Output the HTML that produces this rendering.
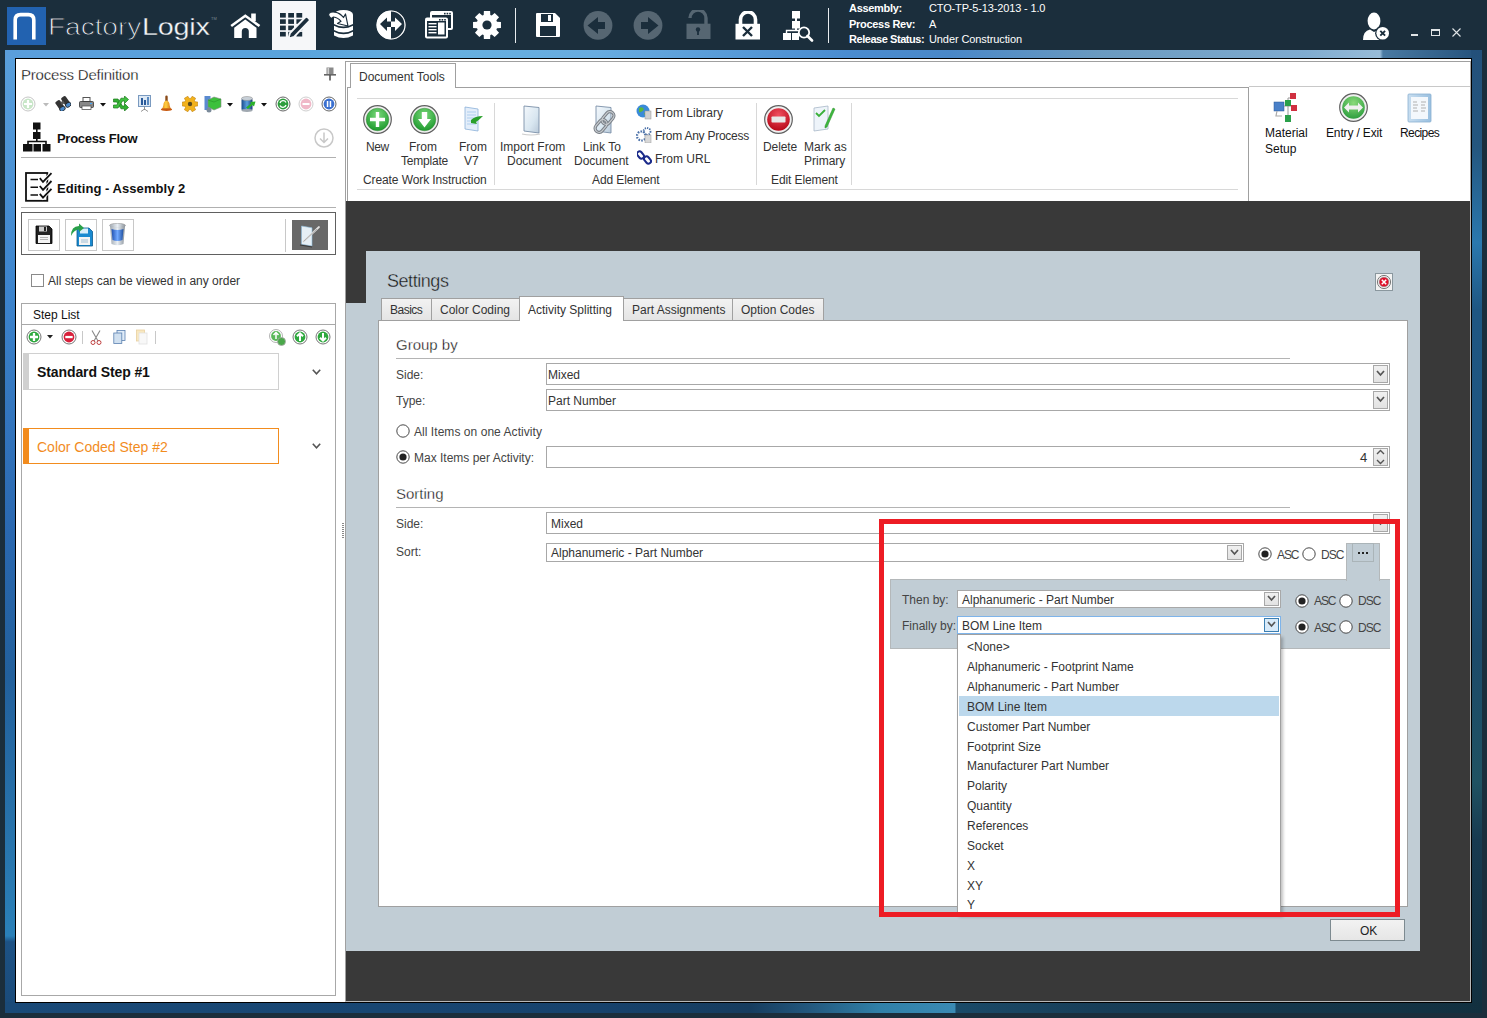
<!DOCTYPE html><html><head><meta charset="utf-8"><style>
*{margin:0;padding:0;box-sizing:border-box}
html,body{width:1487px;height:1018px;overflow:hidden;background:#1b2e3c;font-family:"Liberation Sans",sans-serif}
div,svg{position:absolute}
.t{white-space:nowrap;line-height:1}
</style></head><body><div style="left:5px;top:50px;width:11px;height:963px;background:linear-gradient(180deg,#5aa0dc 0%,#3d84cc 25%,#2a68b0 50%,#22609c 65%,#2874ac 82%,#2a80b8 92%,#1d5285 92.6%,#1a4a78 100%)"></div>
<div style="left:5px;top:50px;width:1477px;height:9px;background:linear-gradient(90deg,#5a9edc 0%,#5aa4dc 20%,#66b0e0 30%,#68ace0 40%,#4a8cd0 57%,#4a88c8 64%,#6a9ac0 74%,#80acd0 88%,#98bcd8 93.1%,#4a7aa2 93.3%,#23507a 100%)"></div>
<div style="left:1471px;top:50px;width:11px;height:963px;background:linear-gradient(180deg,#23507a 0%,#24567e 10%,#2a78ae 20%,#1e5682 27%,#1e5580 50%,#1c4a6a 62%,#1f5262 76%,#173a50 82%,#12303f 100%)"></div>
<div style="left:5px;top:1002px;width:1477px;height:11px;background:linear-gradient(90deg,#1a4a78 0%,#184672 25%,#17426c 40.3%,#163c5e 50.4%,#23587e 54.5%,#3080a8 59.2%,#3a8ab4 64.3%,#1a4a68 64.4%,#183e58 74.1%,#12303f 100%)"></div>
<div style="left:15px;top:58px;width:1457px;height:945px;background:#000"></div>
<div style="left:16px;top:59px;width:1455px;height:943px;background:#fff"></div>
<div style="left:7px;top:7px;width:39px;height:38px;background:#2262b0"></div>
<svg style="left:7px;top:7px" width="39" height="38" viewBox="0 0 39 38"><path d="M8.2 32.5 V13 Q8.2 7.6 13.6 7.6 H21.4 Q26.8 7.6 26.8 13 V32.5" fill="none" stroke="#fff" stroke-width="3.6" stroke-linecap="butt"/></svg>
<div class="t" style="left:48px;top:15px;font-size:24px;font-weight:400;color:#e8ecef;letter-spacing:-0.1px;transform:scaleX(1.175);transform-origin:0 0;-webkit-text-stroke:0.9px #1b2e3c">Factory</div>
<div class="t" style="left:142px;top:15px;font-size:24px;font-weight:400;color:#f4f6f8;letter-spacing:-0.2px;transform:scaleX(1.2);transform-origin:0 0;-webkit-text-stroke:0.3px #1b2e3c">Logix</div>
<div class="t" style="left:211px;top:17px;font-size:4px;font-weight:400;color:#7a8894;">TM</div>
<div style="left:272px;top:1px;width:44px;height:49px;background:#f6f7f9"></div>
<svg style="left:230px;top:12px" width="31" height="27" viewBox="0 0 31 27"><path d="M1.2 14 L15.3 3.8 L29.5 14" fill="none" stroke="#fff" stroke-width="2.6" stroke-linejoin="miter"/><rect x="21.2" y="1.5" width="4.6" height="7.5" fill="#fff"/><path d="M4.2 15.8 L15.3 7.6 L26.5 15.8 V26 H18.8 V19.5 A3.5 3.5 0 0 0 11.8 19.5 V26 H4.2 Z" fill="#fff"/></svg>
<svg style="left:279px;top:12px" width="32" height="28" viewBox="0 0 32 28"><rect x="1.0" y="1.0" width="5.8" height="4.6" fill="#1b2e3c"/><rect x="9.2" y="1.0" width="5.8" height="4.6" fill="#1b2e3c"/><rect x="17.4" y="1.0" width="5.8" height="4.6" fill="#1b2e3c"/><rect x="1.0" y="7.3" width="5.8" height="4.6" fill="#1b2e3c"/><rect x="9.2" y="7.3" width="5.8" height="4.6" fill="#1b2e3c"/><rect x="17.4" y="7.3" width="5.8" height="4.6" fill="#1b2e3c"/><rect x="1.0" y="13.6" width="5.8" height="4.6" fill="#1b2e3c"/><rect x="9.2" y="13.6" width="5.8" height="4.6" fill="#1b2e3c"/><rect x="17.4" y="13.6" width="5.8" height="4.6" fill="#1b2e3c"/><rect x="1.0" y="19.9" width="5.8" height="4.6" fill="#1b2e3c"/><rect x="9.2" y="19.9" width="5.8" height="4.6" fill="#1b2e3c"/><rect x="17.4" y="19.9" width="5.8" height="4.6" fill="#1b2e3c"/><path d="M9.5 26.5 L11 21 L26 5.5 Q27.5 4.2 29 5.5 L30 6.5 Q31.2 8 30 9.3 L15 24.8 Z" fill="#1b2e3c" stroke="#f6f7f9" stroke-width="1.8" stroke-linejoin="round"/></svg>
<svg style="left:328px;top:9px" width="27" height="31" viewBox="0 0 27 31"><ellipse cx="15.5" cy="5.5" rx="9.5" ry="4.5" fill="#fff"/><path d="M6 6 V15 Q15.5 20 25 15 V6 Z" fill="#fff"/><path d="M6 16.8 Q15.5 21.8 25 16.8 V21 Q15.5 26 6 21 Z" fill="#fff"/><path d="M6 22.8 Q15.5 27.8 25 22.8 V26.5 Q15.5 31.5 6 26.5 Z" fill="#fff"/><path d="M0.8 4.5 Q3 2.5 7 3.2 Q12 4 15.5 8.5 L17.5 5 L20 17 L9.5 14.5 L13 12.3 Q10 8.5 5.5 8 Q3.5 10 2.5 9 Q0 6.5 0.8 4.5 Z" fill="#fff" stroke="#1b2e3c" stroke-width="1.2" stroke-linejoin="round"/></svg>
<svg style="left:376px;top:10px" width="30" height="30" viewBox="0 0 30 30"><circle cx="15" cy="15" r="14.3" fill="#fff"/><path d="M15 0.7 A14.3 14.3 0 0 1 15 29.3 Z" fill="#1b2e3c"/><circle cx="15" cy="15" r="14" fill="none" stroke="#fff" stroke-width="1.2"/><path d="M4 14 L11 7.5 V11.5 H15 V17 H11 V21 Z" fill="#1b2e3c"/><path d="M26 14 L19 7.5 V11.5 H15 V17 H19 V21 Z" fill="#fff"/></svg>
<svg style="left:424px;top:10px" width="31" height="30" viewBox="0 0 31 30"><rect x="6" y="1" width="23" height="19" rx="2" fill="#fff"/><rect x="8" y="5" width="19" height="13" fill="#1b2e3c"/><rect x="1" y="7.5" width="23" height="21" rx="2" fill="#fff"/><rect x="3" y="11" width="19" height="15.5" fill="#1b2e3c"/><rect x="4.5" y="13" width="8" height="1.4" fill="#fff"/><rect x="4.5" y="16" width="8" height="1.4" fill="#fff"/><rect x="4.5" y="19" width="8" height="1.4" fill="#fff"/><rect x="4.5" y="22" width="8" height="1.4" fill="#fff"/><rect x="14" y="12.5" width="6.5" height="12" fill="#fff"/><rect x="20" y="2.8" width="1.6" height="1.6" fill="#1b2e3c"/><rect x="22.6" y="2.8" width="1.6" height="1.6" fill="#1b2e3c"/><rect x="25.2" y="2.8" width="1.6" height="1.6" fill="#1b2e3c"/><rect x="15" y="9" width="1.6" height="1.6" fill="#1b2e3c"/><rect x="17.6" y="9" width="1.6" height="1.6" fill="#1b2e3c"/><rect x="20.2" y="9" width="1.6" height="1.6" fill="#1b2e3c"/></svg>
<svg style="left:472px;top:10px" width="30" height="30" viewBox="0 0 30 30"><g transform="translate(15,15)"><path d="M13.96 -3.12 L13.96 3.12 L9.97 3.30 L9.38 4.71 L12.07 7.66 L7.66 12.07 L4.71 9.38 L3.30 9.97 L3.12 13.96 L-3.12 13.96 L-3.30 9.97 L-4.71 9.38 L-7.66 12.07 L-12.07 7.66 L-9.38 4.71 L-9.97 3.30 L-13.96 3.12 L-13.96 -3.12 L-9.97 -3.30 L-9.38 -4.71 L-12.07 -7.66 L-7.66 -12.07 L-4.71 -9.38 L-3.30 -9.97 L-3.12 -13.96 L3.12 -13.96 L3.30 -9.97 L4.71 -9.38 L7.66 -12.07 L12.07 -7.66 L9.38 -4.71 L9.97 -3.30 Z" fill="#fff"/><circle r="4.6" fill="#1b2e3c"/></g></svg>
<div style="left:515px;top:8px;width:1px;height:35px;background:#e8ecef"></div>
<div style="left:828px;top:8px;width:1px;height:35px;background:#e8ecef"></div>
<svg style="left:535px;top:12px" width="26" height="26" viewBox="0 0 26 26"><path d="M1 2 Q1 1 2 1 H20 L25 6 V24 Q25 25 24 25 H2 Q1 25 1 24 Z" fill="#fff"/><rect x="6" y="2" width="12" height="8" fill="#1b2e3c"/><rect x="13" y="3" width="3" height="6" fill="#fff"/><rect x="5" y="14" width="16" height="10" fill="#1b2e3c"/></svg>
<svg style="left:583px;top:10px" width="30" height="30" viewBox="0 0 30 30"><circle cx="15" cy="15.4" r="14.4" fill="#566672"/><path d="M4.5 15.5 L15 7 V12 H22 V19 H15 V24 Z" fill="#1b2e3c"/></svg>
<svg style="left:633px;top:10px" width="30" height="30" viewBox="0 0 30 30"><circle cx="15" cy="15.4" r="14.4" fill="#566672"/><path d="M25.5 15.5 L15 7 V12 H8 V19 H15 V24 Z" fill="#1b2e3c"/></svg>
<svg style="left:686px;top:10px" width="25" height="30" viewBox="0 0 25 30"><path d="M4 8 A8 8 0 0 1 20 8 V14" fill="none" stroke="#566672" stroke-width="3.4"/><rect x="0.5" y="13.7" width="24" height="15.3" fill="#566672"/><circle cx="12" cy="19.5" r="2.2" fill="#1b2e3c"/><rect x="11.1" y="20" width="1.8" height="5" fill="#1b2e3c"/></svg>
<svg style="left:735px;top:11px" width="26" height="29" viewBox="0 0 26 29"><path d="M5.5 13 V8.5 A7.5 7.5 0 0 1 20.5 8.5 V13" fill="none" stroke="#fff" stroke-width="3.6"/><rect x="0.5" y="12.8" width="24.5" height="15.7" fill="#fff"/><path d="M8 16 L17 25 M17 16 L8 25" stroke="#1b2e3c" stroke-width="2.4"/></svg>
<svg style="left:782px;top:10px" width="32" height="32" viewBox="0 0 32 32"><rect x="10" y="1" width="8" height="7.5" fill="#fff"/><rect x="13" y="8" width="2" height="3" fill="#fff"/><rect x="10" y="11" width="8" height="7.5" fill="#fff"/><rect x="13" y="18" width="2" height="2" fill="#fff"/><path d="M4.5 24 V20.5 H18" stroke="#fff" stroke-width="1.4" fill="none"/><rect x="1" y="23" width="8" height="7" fill="#fff"/><rect x="10" y="23" width="7" height="7" fill="#fff"/><circle cx="22" cy="22.5" r="5.2" fill="#1b2e3c" stroke="#fff" stroke-width="1.8"/><path d="M25.5 26 L30 30.5" stroke="#fff" stroke-width="2.6" stroke-linecap="round"/></svg>
<div class="t" style="left:849px;top:3px;font-size:11px;font-weight:700;color:#fff;letter-spacing:-0.3px">Assembly:</div>
<div class="t" style="left:849px;top:19px;font-size:11px;font-weight:700;color:#fff;letter-spacing:-0.3px">Process Rev:</div>
<div class="t" style="left:849px;top:34px;font-size:11px;font-weight:700;color:#fff;letter-spacing:-0.45px">Release Status:</div>
<div class="t" style="left:929px;top:3px;font-size:11px;font-weight:400;color:#fff;letter-spacing:-0.15px">CTO-TP-5-13-2013 - 1.0</div>
<div class="t" style="left:929px;top:19px;font-size:11px;font-weight:400;color:#fff;">A</div>
<div class="t" style="left:929px;top:34px;font-size:11px;font-weight:400;color:#fff;letter-spacing:-0.1px">Under Construction</div>
<svg style="left:1362px;top:12px" width="30" height="30" viewBox="0 0 30 30"><ellipse cx="12" cy="9" rx="6.4" ry="8.5" fill="#fff"/><path d="M1 28 Q1 19 8 17.5 L12 20 L17 17.5 Q22 19 23 28 Z" fill="#fff"/><circle cx="20.7" cy="21.2" r="7.6" fill="#1b2e3c"/><circle cx="20.7" cy="21.2" r="6.3" fill="#fff"/><path d="M18.3 18.8 L23.1 23.6 M23.1 18.8 L18.3 23.6" stroke="#1b2e3c" stroke-width="1.9"/></svg>
<div style="left:1411px;top:34px;width:7px;height:2px;background:#e0e4e6"></div>
<div style="left:1431px;top:29px;width:9px;height:7px;border:1px solid #e0e4e6;border-top-width:2px"></div>
<svg style="left:1452px;top:28px" width="9" height="9" viewBox="0 0 9 9"><path d="M0.5 0.5 L8.5 8.5 M8.5 0.5 L0.5 8.5" stroke="#e0e4e6" stroke-width="1.1"/></svg>
<div class="t" style="left:21px;top:67px;font-size:15px;font-weight:400;color:#000;letter-spacing:-0.2px;-webkit-text-stroke:0.3px #fff">Process Definition</div>
<svg style="left:324px;top:67px" width="12" height="14" viewBox="0 0 12 14"><rect x="2.5" y="0.5" width="7" height="7" fill="#8a8a8a"/><rect x="3.5" y="1" width="1.6" height="6" fill="#d0d0d0"/><rect x="0" y="7" width="12" height="1.6" fill="#666"/><rect x="5.2" y="8" width="1.6" height="5.5" fill="#555"/></svg>
<svg style="left:20px;top:96px" width="16" height="16" viewBox="0 0 16 16"><circle cx="8" cy="8" r="7" fill="#fff" stroke="#c0c0c0" stroke-width="0.9"/><circle cx="8" cy="8" r="5.4" fill="#c8e6c8"/><path d="M8 4 V12 M4 8 H12" stroke="#fff" stroke-width="2.2"/></svg>
<svg style="left:43px;top:103px" width="7" height="4" viewBox="0 0 7 4"><path d="M0 0 H6 L3 3.5 Z" fill="#bbb"/></svg>
<svg style="left:55px;top:95px" width="16" height="16" viewBox="0 0 16 16"><g transform="rotate(-35 8 8)"><rect x="1.5" y="3" width="5.5" height="10" rx="1.5" fill="#333"/><rect x="8.5" y="3" width="5.5" height="10" rx="1.5" fill="#333"/><rect x="6" y="6" width="3.5" height="3" fill="#555"/><ellipse cx="4.2" cy="12.5" rx="3" ry="2.2" fill="#4a88c8" stroke="#222" stroke-width="0.8"/><ellipse cx="11.3" cy="12.5" rx="3" ry="2.2" fill="#4a88c8" stroke="#222" stroke-width="0.8"/></g></svg>
<svg style="left:79px;top:97px" width="15" height="13" viewBox="0 0 15 13"><rect x="4" y="0.5" width="7" height="4" fill="#fff" stroke="#555"/><rect x="0.5" y="4.5" width="14" height="6" rx="1" fill="#888" stroke="#333" stroke-width="0.8"/><rect x="3" y="9" width="9" height="3.5" fill="#fff" stroke="#555" stroke-width="0.8"/><rect x="11" y="6" width="2" height="1" fill="#4af"/></svg>
<svg style="left:100px;top:103px" width="7" height="4" viewBox="0 0 7 4"><path d="M0 0 H6 L3 3.5 Z" fill="#111"/></svg>
<svg style="left:113px;top:96px" width="16" height="15" viewBox="0 0 16 15"><path d="M0.5 3 H5 L9.5 10 H11.5 V7.5 L15.5 11.5 L11.5 15 V12.8 H8 L3.8 6 H0.5 Z" fill="#32b032" stroke="#1a7a1a" stroke-width="0.7"/><path d="M0.5 9 H3.8 L8 2.2 H11.5 V0 L15.5 3.5 L11.5 7.5 V5 H9.5 L5 12 H0.5 Z" fill="#40c040" stroke="#1a7a1a" stroke-width="0.7"/></svg>
<svg style="left:138px;top:95px" width="13" height="17" viewBox="0 0 13 17"><rect x="0.5" y="0.5" width="12" height="11" fill="#dce8f4" stroke="#7a9ac0"/><rect x="3" y="3" width="2" height="7" fill="#2a5a9a"/><rect x="6" y="5" width="2" height="5" fill="#2a5a9a"/><rect x="9" y="2" width="2" height="8" fill="#5a8ac0"/><path d="M6.5 11.5 V15 M6.5 14 L3 16.5 M6.5 14 L10 16.5" stroke="#888" stroke-width="0.9"/></svg>
<svg style="left:160px;top:95px" width="13" height="17" viewBox="0 0 13 17"><defs><linearGradient id="bell" x1="0" x2="1"><stop offset="0" stop-color="#e07a10"/><stop offset="0.45" stop-color="#ffd040"/><stop offset="1" stop-color="#d06010"/></linearGradient></defs><rect x="5.3" y="0.5" width="2.4" height="6" rx="1.2" fill="#8a4a18"/><path d="M6.5 5.5 Q3.5 6 3.3 10.5 Q3 13 1 14.5 H12 Q10 13 9.7 10.5 Q9.5 6 6.5 5.5 Z" fill="url(#bell)"/><ellipse cx="6.5" cy="14.6" rx="5.6" ry="1.4" fill="#c85a10"/></svg>
<svg style="left:182px;top:96px" width="16" height="16" viewBox="0 0 16 16"><path d="M15.75 6.02 L15.75 9.98 L13.16 10.18 L12.47 11.38 L13.59 13.72 L10.16 15.70 L8.69 13.56 L7.31 13.56 L5.84 15.70 L2.41 13.72 L3.53 11.38 L2.84 10.18 L0.25 9.98 L0.25 6.02 L2.84 5.82 L3.53 4.62 L2.41 2.28 L5.84 0.30 L7.31 2.44 L8.69 2.44 L10.16 0.30 L13.59 2.28 L12.47 4.62 L13.16 5.82 Z" fill="#f2b21c" stroke="#c08010" stroke-width="0.6"/><circle cx="8" cy="8" r="2.2" fill="#5a4a20"/></svg>
<svg style="left:204px;top:95px" width="18" height="18" viewBox="0 0 18 18"><rect x="0.5" y="1" width="6" height="14" fill="#5a8ad0"/><path d="M4 5 L10 2 L17 4 V12 L10 15 L4 12 Z" fill="#3cc03c" stroke="#888" stroke-width="0.6"/><path d="M4 5 L10 7 L17 4" fill="none" stroke="#2a9a2a" stroke-width="0.7"/><circle cx="5" cy="15" r="2.5" fill="#7a8a9a"/></svg>
<svg style="left:227px;top:103px" width="7" height="4" viewBox="0 0 7 4"><path d="M0 0 H6 L3 3.5 Z" fill="#111"/></svg>
<svg style="left:241px;top:96px" width="15" height="16" viewBox="0 0 15 16"><defs><linearGradient id="dbg" x1="0" x2="1"><stop offset="0" stop-color="#1a4a8a"/><stop offset="0.5" stop-color="#5aa0e0"/><stop offset="1" stop-color="#1a3a7a"/></linearGradient></defs><rect x="0.5" y="2" width="11" height="13" rx="2" fill="url(#dbg)"/><ellipse cx="6" cy="2.5" rx="5.5" ry="2" fill="#c8d0d8" stroke="#888" stroke-width="0.5"/><ellipse cx="6" cy="14.5" rx="5.5" ry="1.4" fill="#a0a8b0"/><path d="M5 11.5 L10 7.5 L9 6 L14.5 5.5 L13 10.5 L11.5 9 L7 13 Z" fill="#2ab02a"/></svg>
<svg style="left:261px;top:103px" width="7" height="4" viewBox="0 0 7 4"><path d="M0 0 H6 L3 3.5 Z" fill="#111"/></svg>
<svg style="left:275px;top:96px" width="16" height="16" viewBox="0 0 16 16"><circle cx="8" cy="8" r="7" fill="#fff" stroke="#555" stroke-width="0.9"/><circle cx="8" cy="8" r="5.4" fill="#2e9e3e"/><path d="M5 7 A3.2 3.2 0 0 1 11 6.5 M11 9 A3.2 3.2 0 0 1 5 9.5" stroke="#fff" stroke-width="1.3" fill="none"/></svg>
<svg style="left:298px;top:96px" width="16" height="16" viewBox="0 0 16 16"><circle cx="8" cy="8" r="7" fill="#fff" stroke="#c8c8c8" stroke-width="0.9"/><circle cx="8" cy="8" r="5.4" fill="#f0b8c8"/><rect x="4.5" y="7" width="7" height="2" fill="#fff"/></svg>
<svg style="left:321px;top:96px" width="16" height="16" viewBox="0 0 16 16"><circle cx="8" cy="8" r="7" fill="#fff" stroke="#555" stroke-width="0.9"/><circle cx="8" cy="8" r="5.4" fill="#3a70d0"/><rect x="5.8" y="5" width="1.5" height="6" fill="#fff"/><rect x="8.7" y="5" width="1.5" height="6" fill="#fff"/></svg>
<svg style="left:23px;top:122px" width="28" height="30" viewBox="0 0 28 30"><rect x="10" y="0.5" width="7.5" height="7" fill="#111"/><rect x="10" y="10" width="7.5" height="7" fill="#111"/><rect x="13" y="7" width="1.6" height="3" fill="#111"/><rect x="13" y="17" width="1.6" height="3" fill="#111"/><path d="M5 22 V19.5 H23 V22" stroke="#111" stroke-width="1.6" fill="none"/><rect x="0" y="22" width="9.5" height="7.5" fill="#111"/><rect x="10.5" y="22" width="7.5" height="7.5" fill="#111"/><rect x="19.5" y="22" width="8" height="7.5" fill="#111"/></svg>
<div class="t" style="left:57px;top:132px;font-size:13px;font-weight:700;color:#111;letter-spacing:-0.3px">Process Flow</div>
<svg style="left:314px;top:128px" width="20" height="20" viewBox="0 0 20 20"><circle cx="10" cy="10" r="9" fill="none" stroke="#c8c8c8" stroke-width="1.5"/><path d="M10 4.5 V14 M6 10.5 L10 14.5 L14 10.5" stroke="#c8c8c8" stroke-width="1.5" fill="none"/></svg>
<div style="left:21px;top:157px;width:315px;height:1px;background:#b0b0b0"></div>
<svg style="left:25px;top:172px" width="28" height="30" viewBox="0 0 28 30"><rect x="1" y="1" width="21.3" height="27.8" fill="#fff" stroke="#111" stroke-width="1.8"/><path d="M5.5 7.4 H13 M5.5 15.2 H13 M5.5 23 H13" stroke="#111" stroke-width="1.5"/><g fill="none" stroke="#fff" stroke-width="3.6"><path d="M14.8 6.2 L18 10 L26.5 1.2 M14.8 14 L18 17.8 L26.5 9 M14.8 21.8 L18 25.6 L26.5 16.8"/></g><g fill="none" stroke="#111" stroke-width="1.8"><path d="M14.8 6.2 L18 10 L26.5 1.2 M14.8 14 L18 17.8 L26.5 9 M14.8 21.8 L18 25.6 L26.5 16.8"/></g></svg>
<div class="t" style="left:57px;top:182px;font-size:13px;font-weight:700;color:#111;letter-spacing:0.05px">Editing - Assembly 2</div>
<div style="left:21px;top:207px;width:315px;height:1px;background:#b0b0b0"></div>
<div style="left:21px;top:212px;width:315px;height:43px;border:1px solid #606060"></div>
<div style="left:28px;top:219px;width:32px;height:32px;border:1px solid #c8c8c8"></div>
<div style="left:65px;top:219px;width:32px;height:32px;border:1px solid #c8c8c8"></div>
<div style="left:102px;top:219px;width:32px;height:32px;border:1px solid #c8c8c8"></div>
<svg style="left:35px;top:225px" width="18" height="20" viewBox="0 0 18 20"><path d="M1 1 H14 L17 4 V18.5 H1 Z" fill="#222" stroke="#000" stroke-width="0.8"/><rect x="4" y="1.5" width="8" height="5" fill="#ccc"/><rect x="9" y="2" width="2" height="4" fill="#222"/><rect x="3" y="10" width="12" height="8" fill="#f4f4f4"/><path d="M5 12.5 H13 M5 14.5 H13" stroke="#888" stroke-width="0.6"/></svg>
<svg style="left:68px;top:222px" width="26" height="26" viewBox="0 0 26 26"><path d="M9 6 H21 L24.5 9.5 V24 H9 Z" fill="#1a8ad0" stroke="#0a5a90" stroke-width="0.8"/><rect x="12" y="6.5" width="8" height="5" fill="#d8eefa"/><rect x="11" y="15" width="11" height="8" fill="#f4f4f4"/><path d="M13 18 H20 M13 20 H20" stroke="#6a9ac0" stroke-width="0.6"/><path d="M3 14 Q3 4 11 4 V1.5 L16 6 L11 10 V7.5 Q6 7.5 3 14 Z" fill="#2aa04a"/></svg>
<svg style="left:109px;top:223px" width="17" height="24" viewBox="0 0 17 24"><defs><linearGradient id="tr" x1="0" x2="1"><stop offset="0" stop-color="#a0a8b0"/><stop offset="0.5" stop-color="#e8eef4"/><stop offset="1" stop-color="#8a929a"/></linearGradient><linearGradient id="tr2" x1="0" x2="1"><stop offset="0" stop-color="#2050b0"/><stop offset="0.5" stop-color="#70a8ff"/><stop offset="1" stop-color="#2050a0"/></linearGradient></defs><ellipse cx="8.5" cy="2.5" rx="8" ry="2.2" fill="url(#tr)" stroke="#888" stroke-width="0.5"/><path d="M1 3 L2.5 21 Q8.5 23.5 14.5 21 L16 3 Q8.5 5.5 1 3 Z" fill="url(#tr)"/><path d="M2.5 6 L3.5 17 Q8.5 19 13.5 17 L14.5 6 Q8.5 8 2.5 6 Z" fill="url(#tr2)"/></svg>
<div style="left:285px;top:219px;width:1px;height:33px;background:#c8c8c8"></div>
<div style="left:292px;top:220px;width:36px;height:30px;background:#686868"></div>
<svg style="left:297px;top:222px" width="28" height="26" viewBox="0 0 28 26"><path d="M4.5 4 L15 5.8 V24 L4.5 22.3 Z" fill="#e6eff5" stroke="#8ab8d8" stroke-width="0.6"/><path d="M3 23 L15 25" stroke="#3a3a3a" stroke-width="1.2"/><path d="M6.5 19.5 L22 5" stroke="#e0e0e0" stroke-width="1.8" stroke-linecap="round"/><path d="M6.5 19.5 L20 7" stroke="#777" stroke-width="0.5"/></svg>
<div style="left:31px;top:274px;width:13px;height:13px;border:1px solid #8a8a8a;background:#fff"></div>
<div class="t" style="left:48px;top:275px;font-size:12px;font-weight:400;color:#333;">All steps can be viewed in any order</div>
<div style="left:21px;top:303px;width:315px;height:693px;border:1px solid #a8a8a8"></div>
<div style="left:22px;top:324px;width:313px;height:1px;background:#a8a8a8"></div>
<div class="t" style="left:33px;top:309px;font-size:12px;font-weight:400;color:#111;">Step List</div>
<svg style="left:26px;top:329px" width="16" height="16" viewBox="0 0 16 16"><circle cx="8" cy="8" r="7" fill="#fff" stroke="#666" stroke-width="0.9"/><circle cx="8" cy="8" r="5.4" fill="#2ea83e"/><path d="M8 4 V12 M4 8 H12" stroke="#fff" stroke-width="2.3"/></svg>
<svg style="left:47px;top:335px" width="7" height="4" viewBox="0 0 7 4"><path d="M0 0 H6 L3 3.5 Z" fill="#222"/></svg>
<svg style="left:61px;top:329px" width="16" height="16" viewBox="0 0 16 16"><circle cx="8" cy="8" r="7" fill="#fff" stroke="#666" stroke-width="0.9"/><circle cx="8" cy="8" r="5.4" fill="#d8203a"/><rect x="4.3" y="6.9" width="7.4" height="2.3" fill="#fff"/></svg>
<div style="left:82px;top:331px;width:1px;height:13px;background:#c8c8c8"></div>
<svg style="left:90px;top:330px" width="12" height="15" viewBox="0 0 12 15"><path d="M2 0.5 L8 11 M10 0.5 L4 11" stroke="#888" stroke-width="1.1"/><circle cx="3" cy="12.5" r="2" fill="none" stroke="#c04040" stroke-width="1"/><circle cx="9" cy="12.5" r="2" fill="none" stroke="#c04040" stroke-width="1"/></svg>
<svg style="left:113px;top:330px" width="13" height="14" viewBox="0 0 13 14"><rect x="4" y="0.5" width="8" height="10" fill="#e0ecf8" stroke="#5a80b0" stroke-width="0.8"/><rect x="0.8" y="3" width="8" height="10.5" fill="#d0e0f0" stroke="#5a80b0" stroke-width="0.8"/></svg>
<svg style="left:136px;top:329px" width="12" height="16" viewBox="0 0 12 16"><rect x="0.5" y="1" width="8" height="11" fill="#f8e8c0" stroke="#e8d0a0" stroke-width="0.8"/><rect x="3" y="4" width="8" height="11" fill="#f8f8f8" stroke="#e0e0e0" stroke-width="0.8"/></svg>
<div style="left:155px;top:331px;width:1px;height:13px;background:#c8c8c8"></div>
<svg style="left:269px;top:329px" width="17" height="17" viewBox="0 0 17 17"><circle cx="7" cy="7" r="6.5" fill="#fff" stroke="#aaa" stroke-width="0.9"/><circle cx="7" cy="7" r="4.9" fill="#5ab85a"/><path d="M7 3.5 V10 M4.5 6 L7 3.5 L9.5 6" stroke="#fff" stroke-width="1.5" fill="none"/><circle cx="12.5" cy="12.5" r="4" fill="#4aa84a" stroke="#aaa" stroke-width="0.8"/></svg>
<svg style="left:292px;top:329px" width="16" height="16" viewBox="0 0 16 16"><circle cx="8" cy="8" r="7" fill="#fff" stroke="#666" stroke-width="0.9"/><circle cx="8" cy="8" r="5.4" fill="#2ea83e"/><path d="M8 4.3 V12 M5 7.3 L8 4.3 L11 7.3" stroke="#fff" stroke-width="2" fill="none"/></svg>
<svg style="left:315px;top:329px" width="16" height="16" viewBox="0 0 16 16"><circle cx="8" cy="8" r="7" fill="#fff" stroke="#666" stroke-width="0.9"/><circle cx="8" cy="8" r="5.4" fill="#2ea83e"/><path d="M8 4 V11.7 M5 8.7 L8 11.7 L11 8.7" stroke="#fff" stroke-width="2" fill="none"/></svg>
<div style="left:23px;top:353px;width:256px;height:37px;border:1px solid #d0d0d0;background:#fff"></div>
<div style="left:23px;top:353px;width:6px;height:37px;background:#d0d0d0"></div>
<div class="t" style="left:37px;top:365px;font-size:14px;font-weight:700;color:#111;letter-spacing:-0.1px">Standard Step #1</div>
<svg style="left:312px;top:369px" width="9" height="7" viewBox="0 0 9 7"><path d="M0.8 0.8 L4.5 4.8 L8.2 0.8" stroke="#555" stroke-width="1.6" fill="none"/></svg>
<div style="left:23px;top:428px;width:256px;height:36px;border:1px solid #f28c1e;background:#fff"></div>
<div style="left:23px;top:428px;width:6px;height:36px;background:#f28c1e"></div>
<div class="t" style="left:37px;top:440px;font-size:14px;font-weight:400;color:#f28c1e;letter-spacing:0px">Color Coded Step #2</div>
<svg style="left:312px;top:443px" width="9" height="7" viewBox="0 0 9 7"><path d="M0.8 0.8 L4.5 4.8 L8.2 0.8" stroke="#555" stroke-width="1.6" fill="none"/></svg>
<div style="left:342px;top:523px;width:2px;height:1px;background:#888"></div>
<div style="left:342px;top:525px;width:2px;height:1px;background:#888"></div>
<div style="left:342px;top:527px;width:2px;height:1px;background:#888"></div>
<div style="left:342px;top:529px;width:2px;height:1px;background:#888"></div>
<div style="left:342px;top:531px;width:2px;height:1px;background:#888"></div>
<div style="left:342px;top:533px;width:2px;height:1px;background:#888"></div>
<div style="left:342px;top:535px;width:2px;height:1px;background:#888"></div>
<div style="left:342px;top:537px;width:2px;height:1px;background:#888"></div>
<div style="left:345px;top:61px;width:1126px;height:941px;border-left:1px solid #a0a0a0;border-top:1px solid #a0a0a0;border-right:1px solid #a8a8a8"></div>
<div style="left:350px;top:63px;width:106px;height:25px;border:1px solid #a0a0a0;border-bottom:none;background:#fff"></div>
<div class="t" style="left:359px;top:71px;font-size:12px;font-weight:400;color:#333;">Document Tools</div>
<div style="left:348px;top:87px;width:2px;height:1px;background:#a0a0a0"></div>
<div style="left:456px;top:87px;width:793px;height:1px;background:#a0a0a0"></div>
<div style="left:347px;top:87px;width:1px;height:114px;background:#a0a0a0"></div>
<div style="left:1248px;top:87px;width:1px;height:114px;background:#a0a0a0"></div>
<div style="left:1249px;top:86px;width:221px;height:1px;background:#c8c8c8"></div>
<div style="left:357px;top:98px;width:881px;height:1px;background:#d8d8d8"></div>
<div style="left:357px;top:189px;width:881px;height:1px;background:#d8d8d8"></div>
<div style="left:494px;top:103px;width:1px;height:82px;background:#d8d8d8"></div>
<div style="left:756px;top:103px;width:1px;height:82px;background:#d8d8d8"></div>
<div style="left:851px;top:103px;width:1px;height:82px;background:#d8d8d8"></div>
<svg style="left:363px;top:105px" width="29" height="29" viewBox="0 0 29 29"><defs><radialGradient id="g363" cx="0.5" cy="0.3" r="0.7"><stop offset="0" stop-color="#7ad87a"/><stop offset="1" stop-color="#1e9a2e"/></radialGradient></defs><circle cx="14.5" cy="14.5" r="13.8" fill="#f0f0f0" stroke="#606060" stroke-width="1.2"/><circle cx="14.5" cy="14.5" r="11.3" fill="url(#g363)" stroke="#2a7a2a" stroke-width="0.4"/><path d="M14.5 7 V22 M7 14.5 H22" stroke="#fff" stroke-width="3.4"/></svg>
<svg style="left:410px;top:105px" width="29" height="29" viewBox="0 0 29 29"><defs><radialGradient id="g410" cx="0.5" cy="0.3" r="0.7"><stop offset="0" stop-color="#7ad87a"/><stop offset="1" stop-color="#1e9a2e"/></radialGradient></defs><circle cx="14.5" cy="14.5" r="13.8" fill="#f0f0f0" stroke="#606060" stroke-width="1.2"/><circle cx="14.5" cy="14.5" r="11.3" fill="url(#g410)" stroke="#2a7a2a" stroke-width="0.4"/><path d="M11.8 7 H17.2 V14 H21 L14.5 22.5 L8 14 H11.8 Z" fill="#fff"/></svg>
<svg style="left:463px;top:106px" width="22" height="27" viewBox="0 0 22 27"><path d="M2 1 L15 3 V25 L2 23 Z" fill="#e4eefa" stroke="#8ab0d8" stroke-width="0.8"/><path d="M4 6 H13 M4 9 H13 M4 12 H13 M4 15 H13 M4 18 H13" stroke="#9ac0e8" stroke-width="0.7"/><path d="M8 14 Q12 10 20 10 Q16 14 13 16 L14 18 L8 17 Z" fill="#2aa02a"/></svg>
<div class="t" style="left:366px;top:141px;font-size:12px;font-weight:400;color:#333;letter-spacing:-0.4px">New</div>
<div class="t" style="left:409px;top:141px;font-size:12px;font-weight:400;color:#333;">From</div>
<div class="t" style="left:401px;top:155px;font-size:12px;font-weight:400;color:#333;letter-spacing:-0.2px">Template</div>
<div class="t" style="left:459px;top:141px;font-size:12px;font-weight:400;color:#333;">From</div>
<div class="t" style="left:464px;top:155px;font-size:12px;font-weight:400;color:#333;">V7</div>
<div class="t" style="left:363px;top:174px;font-size:12px;font-weight:400;color:#333;letter-spacing:-0.1px">Create Work Instruction</div>
<svg style="left:521px;top:105px" width="22" height="31" viewBox="0 0 22 31"><defs><linearGradient id="doc" x1="0" y1="0" x2="1" y2="1"><stop offset="0" stop-color="#f4f8fc"/><stop offset="0.6" stop-color="#d8e6f0"/><stop offset="1" stop-color="#b8c8d8"/></linearGradient></defs><path d="M3 1 L18 2.5 V28 L3 26 Z" fill="url(#doc)" stroke="#7a90a8" stroke-width="0.9"/><path d="M1 29 Q10 31 19 29" stroke="#ccc" stroke-width="1.2" fill="none"/></svg>
<div class="t" style="left:500px;top:141px;font-size:12px;font-weight:400;color:#333;letter-spacing:0px">Import From</div>
<div class="t" style="left:507px;top:155px;font-size:12px;font-weight:400;color:#333;">Document</div>
<svg style="left:593px;top:105px" width="27" height="31" viewBox="0 0 27 31"><path d="M3 1 L18 2.5 V28 L3 26 Z" fill="url(#doc)" stroke="#7a90a8" stroke-width="0.9"/><g fill="none" stroke="#7a8088" stroke-width="3.2"><rect x="11" y="6" width="8" height="14" rx="4" transform="rotate(40 15 13)"/><rect x="4" y="14" width="8" height="14" rx="4" transform="rotate(40 8 21)"/></g><g fill="none" stroke="#c8ccd0" stroke-width="1.2"><rect x="11" y="6" width="8" height="14" rx="4" transform="rotate(40 15 13)"/><rect x="4" y="14" width="8" height="14" rx="4" transform="rotate(40 8 21)"/></g></svg>
<div class="t" style="left:583px;top:141px;font-size:12px;font-weight:400;color:#333;">Link To</div>
<div class="t" style="left:574px;top:155px;font-size:12px;font-weight:400;color:#333;">Document</div>
<svg style="left:636px;top:104px" width="16" height="16" viewBox="0 0 16 16"><circle cx="7" cy="7" r="6.5" fill="#3a8ad8"/><path d="M3 4 Q6 2 8 5 Q6 9 3 8 Z M8 9 Q11 8 12 11 Q9 13 8 9 Z" fill="#5ab83a"/><rect x="9" y="7" width="6" height="8" fill="#d0d0d0" stroke="#999" stroke-width="0.5"/></svg>
<div class="t" style="left:655px;top:107px;font-size:12px;font-weight:400;color:#333;">From Library</div>
<svg style="left:636px;top:127px" width="16" height="16" viewBox="0 0 16 16"><circle cx="5.5" cy="9" r="4.5" fill="none" stroke="#4a70a8" stroke-width="2.2" stroke-dasharray="1.6 1.2"/><circle cx="11" cy="4.5" r="3.5" fill="none" stroke="#4a70a8" stroke-width="1.8" stroke-dasharray="1.3 1"/><rect x="9" y="8" width="6" height="8" fill="#d8d8d8" stroke="#999" stroke-width="0.5"/></svg>
<div class="t" style="left:655px;top:130px;font-size:12px;font-weight:400;color:#333;letter-spacing:-0.25px">From Any Process</div>
<svg style="left:637px;top:150px" width="15" height="15" viewBox="0 0 15 15"><g fill="none" stroke="#1a2a8a" stroke-width="2"><rect x="1" y="1" width="5" height="8" rx="2.5" transform="rotate(-40 3.5 5)"/><rect x="8" y="6" width="5" height="8" rx="2.5" transform="rotate(-40 10.5 10)"/></g></svg>
<div class="t" style="left:655px;top:153px;font-size:12px;font-weight:400;color:#333;">From URL</div>
<div class="t" style="left:592px;top:174px;font-size:12px;font-weight:400;color:#333;letter-spacing:-0.1px">Add Element</div>
<svg style="left:764px;top:105px" width="29" height="29" viewBox="0 0 29 29"><defs><radialGradient id="rd" cx="0.5" cy="0.3" r="0.7"><stop offset="0" stop-color="#f05060"/><stop offset="1" stop-color="#b80818"/></radialGradient></defs><circle cx="14.5" cy="14.5" r="13.8" fill="#f0f0f0" stroke="#606060" stroke-width="1.2"/><circle cx="14.5" cy="14.5" r="11.3" fill="url(#rd)"/><rect x="7.5" y="11.5" width="14" height="6" rx="0.8" fill="#e8e8e8"/></svg>
<div class="t" style="left:763px;top:141px;font-size:12px;font-weight:400;color:#333;letter-spacing:-0.1px">Delete</div>
<svg style="left:812px;top:105px" width="24" height="29" viewBox="0 0 24 29"><path d="M2 3 L16 1 V24 L2 26 Z" fill="#eef4fa" stroke="#a8b8c8" stroke-width="0.8"/><path d="M4 8 L7 11 L13 5" stroke="#3ab03a" stroke-width="1.8" fill="none"/><path d="M13 21 L21 3 L23 4 L15 22 L13 23 Z" fill="#3cb83c" stroke="#2a8a2a" stroke-width="0.5"/></svg>
<div class="t" style="left:804px;top:141px;font-size:12px;font-weight:400;color:#333;">Mark as</div>
<div class="t" style="left:804px;top:155px;font-size:12px;font-weight:400;color:#333;">Primary</div>
<div class="t" style="left:771px;top:174px;font-size:12px;font-weight:400;color:#333;letter-spacing:-0.1px">Edit Element</div>
<svg style="left:1272px;top:92px" width="32" height="32" viewBox="0 0 32 32"><rect x="2" y="10" width="10" height="9" fill="#4a80c8" stroke="#2a5a98" stroke-width="0.5"/><path d="M12 14 H16 M16 6 V24 M16 6 H19 M16 14 H19 M16 24 H19" stroke="#999" stroke-width="1"/><rect x="18" y="1" width="6" height="6" fill="#d03040"/><rect x="13" y="8" width="6" height="6" fill="#2aa04a"/><rect x="19" y="13" width="6" height="6" fill="#d03040"/><rect x="13" y="23" width="6" height="7" fill="#2aa04a"/><path d="M5 19 L4 24 H10" stroke="#aaa" stroke-width="1.2" fill="none"/></svg>
<div class="t" style="left:1265px;top:127px;font-size:12px;font-weight:400;color:#111;">Material</div>
<div class="t" style="left:1265px;top:143px;font-size:12px;font-weight:400;color:#111;">Setup</div>
<svg style="left:1339px;top:93px" width="29" height="29" viewBox="0 0 29 29"><defs><radialGradient id="ee" cx="0.5" cy="0.3" r="0.7"><stop offset="0" stop-color="#8ada7a"/><stop offset="1" stop-color="#2e9e3e"/></radialGradient></defs><circle cx="14.5" cy="14.5" r="13.8" fill="#f0f0f0" stroke="#606060" stroke-width="1.2"/><circle cx="14.5" cy="14.5" r="11.3" fill="url(#ee)"/><path d="M5 14.5 L10 9.5 V12.5 H19 V9.5 L24 14.5 L19 19.5 V16.5 H10 V19.5 Z" fill="#f0f0f0"/></svg>
<div class="t" style="left:1326px;top:127px;font-size:12px;font-weight:400;color:#111;letter-spacing:-0.15px">Entry / Exit</div>
<svg style="left:1407px;top:93px" width="26" height="31" viewBox="0 0 26 31"><defs><linearGradient id="rc" x1="0" x2="1"><stop offset="0" stop-color="#c8def0"/><stop offset="1" stop-color="#9ac0e0"/></linearGradient></defs><rect x="1" y="1" width="23" height="28" rx="1" fill="url(#rc)" stroke="#8ab0d0" stroke-width="0.8"/><rect x="4" y="4" width="17" height="22" fill="#f4f8fc"/><path d="M6 9 H10 M6 12 H11 M6 15 H10 M6 18 H11 M14 9 H19 M14 12 H18 M14 15 H19 M14 18 H18" stroke="#b0b0b0" stroke-width="1"/></svg>
<div class="t" style="left:1400px;top:127px;font-size:12px;font-weight:400;color:#111;letter-spacing:-0.6px">Recipes</div>
<div style="left:346px;top:201px;width:1124px;height:800px;background:#393939"></div>
<div style="left:1470px;top:200px;width:1px;height:802px;background:#b8b8b8"></div>
<div style="left:345px;top:1001px;width:1126px;height:1px;background:#b8b8b8"></div>
<div style="left:366px;top:251px;width:1054px;height:700px;background:#c1cdd5"></div>
<div style="left:346px;top:303px;width:20px;height:648px;background:#c1cdd5"></div>
<div class="t" style="left:387px;top:272px;font-size:18px;font-weight:400;color:#1a1a1a;letter-spacing:-0.45px;-webkit-text-stroke:0.35px #c1cdd5">Settings</div>
<div style="left:1375px;top:273px;width:18px;height:18px;border:1px solid #8a979e;background:#f2f2f2"></div>
<svg style="left:1376px;top:274px" width="16" height="16" viewBox="0 0 16 16"><circle cx="8" cy="8" r="6.6" fill="none" stroke="#7a7a7a" stroke-width="1"/><circle cx="8" cy="8" r="4.8" fill="#e0102a" stroke="#888" stroke-width="0.5"/><path d="M5.8 5.8 L10.2 10.2 M10.2 5.8 L5.8 10.2" stroke="#fff" stroke-width="1.6"/></svg>
<div style="left:378px;top:320px;width:1030px;height:587px;border:1px solid #a0a0a0;background:#fff"></div>
<div style="left:381px;top:298px;width:51px;height:23px;border:1px solid #a0a0a0;background:linear-gradient(#f2f2f2,#e4e4e4)"></div>
<div class="t" style="left:390px;top:304px;font-size:12px;font-weight:400;letter-spacing:-0.5px;color:#333;">Basics</div>
<div style="left:431px;top:298px;width:89px;height:23px;border:1px solid #a0a0a0;background:linear-gradient(#f2f2f2,#e4e4e4)"></div>
<div class="t" style="left:440px;top:304px;font-size:12px;font-weight:400;color:#333;">Color Coding</div>
<div style="left:732px;top:298px;width:92px;height:23px;border:1px solid #a0a0a0;background:linear-gradient(#f2f2f2,#e4e4e4)"></div>
<div class="t" style="left:741px;top:304px;font-size:12px;font-weight:400;color:#333;">Option Codes</div>
<div style="left:623px;top:298px;width:110px;height:23px;border:1px solid #a0a0a0;background:linear-gradient(#f2f2f2,#e4e4e4)"></div>
<div class="t" style="left:632px;top:304px;font-size:12px;font-weight:400;color:#333;">Part Assignments</div>
<div style="left:519px;top:296px;width:105px;height:25px;border:1px solid #a0a0a0;border-bottom:none;background:#fff"></div>
<div class="t" style="left:528px;top:304px;font-size:12px;font-weight:400;color:#333;">Activity Splitting</div>
<div style="left:520px;top:320px;width:103px;height:1px;background:#fff"></div>
<div class="t" style="left:396px;top:337px;font-size:15px;font-weight:400;color:#000;letter-spacing:0px;-webkit-text-stroke:0.35px #fff">Group by</div>
<div style="left:396px;top:358px;width:894px;height:1px;background:#b4b4b4"></div>
<div class="t" style="left:396px;top:369px;font-size:12px;font-weight:400;color:#444;">Side:</div>
<div style="left:546px;top:363px;width:844px;height:22px;border:1px solid #a8a8a8;background:#fff"></div>
<div style="left:1373px;top:365px;width:15px;height:18px;border:1px solid #a8a8a8;background:linear-gradient(#f0f0f0,#e2e2e2)"></div>
<svg style="left:1376px;top:370px" width="9" height="7" viewBox="0 0 9 7"><path d="M1 1 L4.5 5 L8 1" stroke="#555" stroke-width="1.7" fill="none"/></svg>
<div class="t" style="left:548px;top:369px;font-size:12px;font-weight:400;color:#333;">Mixed</div>
<div class="t" style="left:396px;top:395px;font-size:12px;font-weight:400;color:#444;">Type:</div>
<div style="left:546px;top:389px;width:844px;height:22px;border:1px solid #a8a8a8;background:#fff"></div>
<div style="left:1373px;top:391px;width:15px;height:18px;border:1px solid #a8a8a8;background:linear-gradient(#f0f0f0,#e2e2e2)"></div>
<svg style="left:1376px;top:396px" width="9" height="7" viewBox="0 0 9 7"><path d="M1 1 L4.5 5 L8 1" stroke="#555" stroke-width="1.7" fill="none"/></svg>
<div class="t" style="left:548px;top:395px;font-size:12px;font-weight:400;color:#333;">Part Number</div>
<svg style="left:396px;top:424px" width="14" height="14" viewBox="0 0 14 14"><circle cx="7" cy="7" r="6.2" fill="#fff" stroke="#333" stroke-width="0.9"/></svg>
<div class="t" style="left:414px;top:426px;font-size:12px;font-weight:400;color:#444;letter-spacing:0.05px">All Items on one Activity</div>
<svg style="left:396px;top:450px" width="14" height="14" viewBox="0 0 14 14"><circle cx="7" cy="7" r="6.2" fill="#fff" stroke="#333" stroke-width="0.9"/><circle cx="7" cy="7" r="3.6" fill="#222"/></svg>
<div class="t" style="left:414px;top:452px;font-size:12px;font-weight:400;color:#444;">Max Items per Activity:</div>
<div style="left:546px;top:446px;width:844px;height:22px;border:1px solid #a8a8a8;background:#fff"></div>
<div class="t" style="left:1360px;top:451px;font-size:13px;font-weight:400;color:#333;font-family:"Liberation Serif",serif">4</div>
<div style="left:1373px;top:448px;width:15px;height:18px;border:1px solid #a8a8a8;background:linear-gradient(#f0f0f0,#e2e2e2)"></div>
<svg style="left:1376px;top:449px" width="9" height="16" viewBox="0 0 9 16"><path d="M1 5 L4.5 1.5 L8 5 M1 11 L4.5 14.5 L8 11" stroke="#555" stroke-width="1.4" fill="none"/></svg>
<div class="t" style="left:396px;top:486px;font-size:15px;font-weight:400;color:#000;letter-spacing:0px;-webkit-text-stroke:0.35px #fff">Sorting</div>
<div style="left:396px;top:507px;width:894px;height:1px;background:#b4b4b4"></div>
<div class="t" style="left:396px;top:518px;font-size:12px;font-weight:400;color:#444;">Side:</div>
<div style="left:546px;top:512px;width:844px;height:22px;border:1px solid #a8a8a8;background:#fff"></div>
<div style="left:1373px;top:514px;width:15px;height:18px;border:1px solid #a8a8a8;background:linear-gradient(#f0f0f0,#e2e2e2)"></div>
<svg style="left:1376px;top:519px" width="9" height="7" viewBox="0 0 9 7"><path d="M1 1 L4.5 5 L8 1" stroke="#555" stroke-width="1.7" fill="none"/></svg>
<div class="t" style="left:551px;top:518px;font-size:12px;font-weight:400;color:#333;">Mixed</div>
<div class="t" style="left:396px;top:546px;font-size:12px;font-weight:400;color:#444;">Sort:</div>
<div style="left:546px;top:543px;width:698px;height:19px;border:1px solid #a8a8a8;background:#fff"></div>
<div style="left:1227px;top:545px;width:15px;height:15px;border:1px solid #a8a8a8;background:linear-gradient(#f0f0f0,#e2e2e2)"></div>
<svg style="left:1230px;top:549px" width="9" height="7" viewBox="0 0 9 7"><path d="M1 1 L4.5 5 L8 1" stroke="#555" stroke-width="1.7" fill="none"/></svg>
<div class="t" style="left:551px;top:547px;font-size:12px;font-weight:400;color:#333;">Alphanumeric - Part Number</div>
<svg style="left:1258px;top:547px" width="14" height="14" viewBox="0 0 14 14"><circle cx="7" cy="7" r="6.2" fill="#fff" stroke="#333" stroke-width="0.9"/><circle cx="7" cy="7" r="3.6" fill="#222"/></svg>
<div class="t" style="left:1277px;top:549px;font-size:12px;font-weight:400;color:#444;letter-spacing:-1.1px">ASC</div>
<svg style="left:1302px;top:547px" width="14" height="14" viewBox="0 0 14 14"><circle cx="7" cy="7" r="6.2" fill="#fff" stroke="#333" stroke-width="0.9"/></svg>
<div class="t" style="left:1321px;top:549px;font-size:12px;font-weight:400;color:#444;letter-spacing:-1.0px">DSC</div>
<div style="left:890px;top:579px;width:500px;height:70px;background:#c1cdd5;border:1px solid #b4b8ba;border-right:none"></div>
<div style="left:1346px;top:543px;width:34px;height:38px;background:#c1cdd5;border:1px solid #b4b8ba;border-bottom:none"></div>
<div style="left:1352px;top:543px;width:22px;height:19px;border:1px solid #aab4b8;background:#c1cdd5"></div>
<svg style="left:1357px;top:552px" width="12" height="3" viewBox="0 0 12 3"><rect x="1" y="0" width="2" height="2" fill="#222"/><rect x="5" y="0" width="2" height="2" fill="#222"/><rect x="9" y="0" width="2" height="2" fill="#222"/></svg>
<div class="t" style="left:902px;top:594px;font-size:12px;font-weight:400;color:#444;">Then by:</div>
<div style="left:957px;top:590px;width:324px;height:18px;border:1px solid #a8a8a8;background:#fff"></div>
<div style="left:1264px;top:592px;width:15px;height:14px;border:1px solid #a8a8a8;background:linear-gradient(#f0f0f0,#e2e2e2)"></div>
<svg style="left:1267px;top:595px" width="9" height="7" viewBox="0 0 9 7"><path d="M1 1 L4.5 5 L8 1" stroke="#555" stroke-width="1.7" fill="none"/></svg>
<div class="t" style="left:962px;top:594px;font-size:12px;font-weight:400;color:#333;">Alphanumeric - Part Number</div>
<div class="t" style="left:902px;top:620px;font-size:12px;font-weight:400;color:#444;">Finally by:</div>
<div style="left:957px;top:616px;width:324px;height:18px;border:1px solid #7eb4ea;background:#fff"></div>
<div style="left:1264px;top:618px;width:15px;height:14px;border:1px solid #3c7fb1;background:#d8eaf9"></div>
<svg style="left:1267px;top:621px" width="9" height="7" viewBox="0 0 9 7"><path d="M1 1 L4.5 5 L8 1" stroke="#555" stroke-width="1.7" fill="none"/></svg>
<div class="t" style="left:962px;top:620px;font-size:12px;font-weight:400;color:#333;">BOM Line Item</div>
<svg style="left:1295px;top:594px" width="14" height="14" viewBox="0 0 14 14"><circle cx="7" cy="7" r="6.2" fill="#fff" stroke="#333" stroke-width="0.9"/><circle cx="7" cy="7" r="3.6" fill="#222"/></svg>
<div class="t" style="left:1314px;top:595px;font-size:12px;font-weight:400;color:#444;letter-spacing:-1.1px">ASC</div>
<svg style="left:1339px;top:594px" width="14" height="14" viewBox="0 0 14 14"><circle cx="7" cy="7" r="6.2" fill="#fff" stroke="#333" stroke-width="0.9"/></svg>
<div class="t" style="left:1358px;top:595px;font-size:12px;font-weight:400;color:#444;letter-spacing:-1.0px">DSC</div>
<svg style="left:1295px;top:620px" width="14" height="14" viewBox="0 0 14 14"><circle cx="7" cy="7" r="6.2" fill="#fff" stroke="#333" stroke-width="0.9"/><circle cx="7" cy="7" r="3.6" fill="#222"/></svg>
<div class="t" style="left:1314px;top:622px;font-size:12px;font-weight:400;color:#444;letter-spacing:-1.1px">ASC</div>
<svg style="left:1339px;top:620px" width="14" height="14" viewBox="0 0 14 14"><circle cx="7" cy="7" r="6.2" fill="#fff" stroke="#333" stroke-width="0.9"/></svg>
<div class="t" style="left:1358px;top:622px;font-size:12px;font-weight:400;color:#444;letter-spacing:-1.0px">DSC</div>
<div style="left:1330px;top:919px;width:75px;height:22px;border:1px solid #7d8a90;background:linear-gradient(#f2f2f2,#e6e6e6)"></div>
<div class="t" style="left:1360px;top:925px;font-size:12px;font-weight:400;color:#222;">OK</div>
<div style="left:957px;top:634px;width:324px;height:280px;border:1px solid #a0a0a0;background:#fff;box-shadow:2px 3px 3px rgba(0,0,0,0.25)"></div>
<div style="left:959px;top:696px;width:320px;height:20px;background:#bcd8ec"></div>
<div class="t" style="left:967px;top:641px;font-size:12px;font-weight:400;color:#333;">&lt;None&gt;</div>
<div class="t" style="left:967px;top:661px;font-size:12px;font-weight:400;color:#333;">Alphanumeric - Footprint Name</div>
<div class="t" style="left:967px;top:681px;font-size:12px;font-weight:400;color:#333;">Alphanumeric - Part Number</div>
<div class="t" style="left:967px;top:701px;font-size:12px;font-weight:400;color:#333;">BOM Line Item</div>
<div class="t" style="left:967px;top:721px;font-size:12px;font-weight:400;color:#333;">Customer Part Number</div>
<div class="t" style="left:967px;top:741px;font-size:12px;font-weight:400;color:#333;">Footprint Size</div>
<div class="t" style="left:967px;top:760px;font-size:12px;font-weight:400;color:#333;">Manufacturer Part Number</div>
<div class="t" style="left:967px;top:780px;font-size:12px;font-weight:400;color:#333;">Polarity</div>
<div class="t" style="left:967px;top:800px;font-size:12px;font-weight:400;color:#333;">Quantity</div>
<div class="t" style="left:967px;top:820px;font-size:12px;font-weight:400;color:#333;">References</div>
<div class="t" style="left:967px;top:840px;font-size:12px;font-weight:400;color:#333;">Socket</div>
<div class="t" style="left:967px;top:860px;font-size:12px;font-weight:400;color:#333;">X</div>
<div class="t" style="left:967px;top:880px;font-size:12px;font-weight:400;color:#333;">XY</div>
<div class="t" style="left:967px;top:899px;font-size:12px;font-weight:400;color:#333;">Y</div>
<div style="left:879px;top:519px;width:521px;height:398px;border:5px solid #ed1c24"></div></body></html>
